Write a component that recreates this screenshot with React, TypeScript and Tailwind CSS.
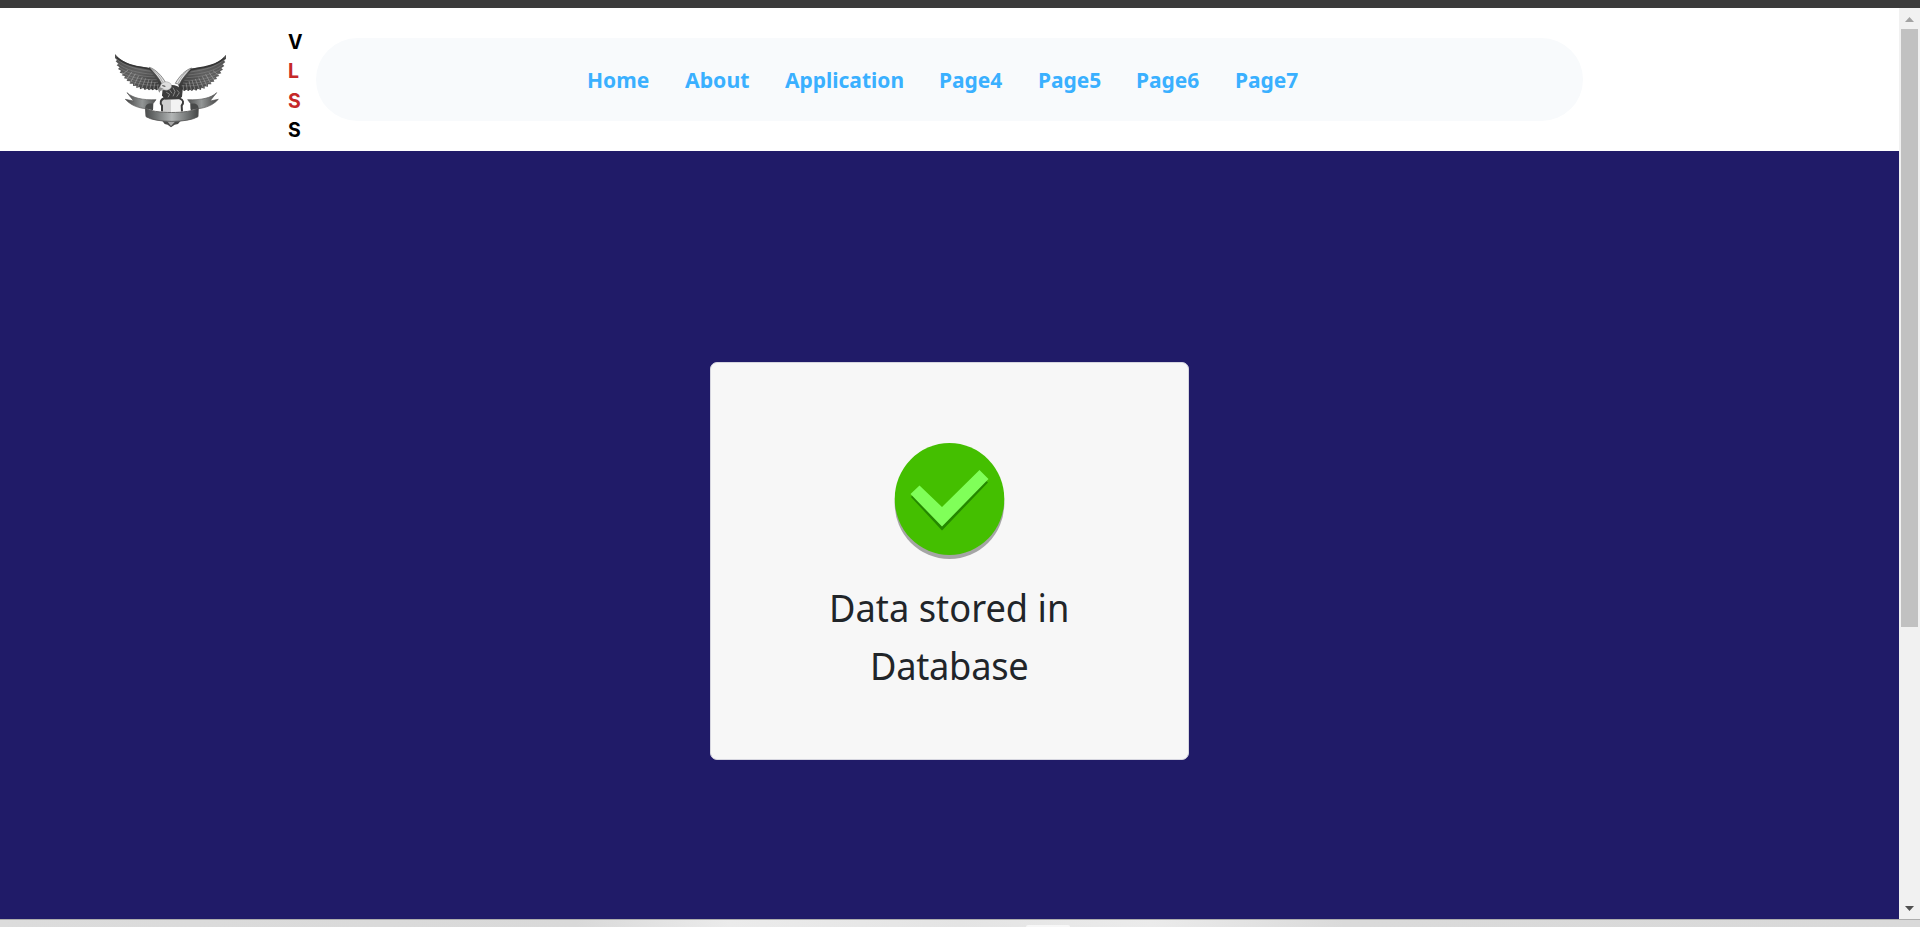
const wingShape =
  "M45 42 C58 58 76 69 98 76 C118 81 136 80 151 84 C168 92 180 112 188 132 L184 150 L176 147 L170 151 L164 147 L158 151 L153 147 L147 151 L142 146 L134 150 L130 144 L120 148 L119 141 L109 144 L109 137 L99 138 L99 131 L89 131 L90 124 L80 123 L82 117 L72 115 L75 109 L65 106 L69 101 L59 98 L63 92 L54 87 L59 82 L50 76 L55 71 L47 64 L51 60 L45 54 Z";

const barbs = [
  "M50 56 C74 80 112 88 152 94",
  "M53 70 C76 90 114 99 158 103",
  "M59 84 C82 100 118 109 164 111",
  "M66 97 C90 112 124 120 170 119",
  "M77 110 C98 121 130 130 174 127",
  "M91 123 C112 131 142 138 178 135",
];

const quills = [
  "M84 90 L68 103", "M96 95 L80 118", "M106 101 L91 128", "M116 107 L102 136",
  "M127 111 L113 141", "M137 115 L125 145", "M147 118 L138 147", "M156 121 L149 148", "M165 127 L161 148", "M174 133 L172 148",
];

function Wing() {
  return (
    <g>
      <path d={wingShape} fill="url(#wing)" />
      <g fill="none" stroke="#a5a5a5" strokeWidth="2" opacity=".5">
        {barbs.map((d) => <path key={d} d={d} />)}
      </g>
      <g fill="none" stroke="#c9c9c9" strokeWidth="2.5" opacity=".5">
        {quills.map((d) => <path key={d} d={d} />)}
      </g>
      <path d="M50 52 C75 76 112 80 150 87 C168 98 178 113 184 130" fill="none" stroke="#353535" strokeWidth="5" />
      <path d="M148 82 C166 87 186 108 197 128 L185 131 C176 112 162 98 148 82Z" fill="#dedede" stroke="#555" strokeWidth="2" />
      <path d="M153 86 C169 95 180 109 188 127" fill="none" stroke="#8b8b8b" strokeWidth="2" />
    </g>
  );
}

function Ribbon() {
  return (
    <g>
      <path d="M81 158 C98 174 128 181 168 179 L159 191 L158 207 C132 207 100 204 76 178 L101 183 Z" fill="url(#tail)" stroke="#555" strokeWidth="2" />
      <path d="M136 205 C135 193 145 188 159 191 L159 211 Z" fill="#484a4a" />
    </g>
  );
}

function EagleLogo() {
  return (
    <svg className="h-[100px] w-[140px]" viewBox="0 0 420 300" aria-label="Eagle">
      <defs>
        <linearGradient id="wing" x1="0" y1="0" x2="1" y2="1">
          <stop offset="0" stopColor="#505050" /><stop offset=".5" stopColor="#606060" /><stop offset="1" stopColor="#303030" />
        </linearGradient>
        <linearGradient id="tail">
          <stop offset="0" stopColor="#444" /><stop offset=".55" stopColor="#939696" /><stop offset="1" stopColor="#505252" />
        </linearGradient>
        <linearGradient id="band">
          <stop offset="0" stopColor="#4a4c4c" /><stop offset=".2" stopColor="#707373" /><stop offset=".5" stopColor="#b2b5b5" /><stop offset=".8" stopColor="#707373" /><stop offset="1" stopColor="#444646" />
        </linearGradient>
      </defs>
      <Wing />
      <g transform="translate(423 2) scale(-1 1)"><Wing /></g>
      <Ribbon />
      <g transform="translate(431 0) scale(-1 1)"><Ribbon /></g>
      <path d="M185 180 L244 180 L244 216 L185 216Z" fill="#f2f2f2" />
      <path d="M185 180 L213 180 L213 216 L185 216Z" fill="#cfcfcf" />
      <path d="M188 146 C206 130 230 131 248 151 L246 170 L238 178 L194 179 L186 166Z" fill="#3c3c3c" />
      <path d="M194 175 C181 178 179 189 186 197 L186 214 M238 175 C251 179 252 188 245 197 L246 214" fill="none" stroke="#3c3c3c" strokeWidth="6" />
      <path d="M199 157 L209 163 L204 172 M219 143 L225 155 L219 169 M230 150 L238 158 L230 170 M209 150 L216 160" fill="none" stroke="#999" strokeWidth="2.5" />
      <path d="M181 137 C186 124 202 122 212 131 C218 139 213 147 203 150 C195 152 190 147 185 151 C179 153 176 148 181 137Z" fill="#dedede" stroke="#919191" strokeWidth="1.5" />
      <path d="M178 141 C172 147 175 155 180 158 C179 151 186 149 191 146Z" fill="#8e8e8e" />
      <path d="M187 137 L196 139" stroke="#333" strokeWidth="3" />
      <path d="M185 240 L244 240 L234 252 L224 254 L213 262 L203 254 L194 252Z" fill="#494949" />
      <path d="M201 243 L213 258 L227 243Z" fill="#a5a5a5" />
      <path d="M136 204 C159 222 269 222 295 204 L294 230 C263 249 168 249 138 230Z" fill="url(#band)" stroke="#555" strokeWidth="2.5" />
    </svg>
  );
}

function SuccessIcon() {
  return (
    <svg className="h-[118px] w-[112px] shrink-0" viewBox="0 0 112 118">
      <ellipse cx="55.5" cy="61.5" rx="54.8" ry="55.5" fill="#a5a5a5" />
      <ellipse cx="55.5" cy="57" rx="54.8" ry="56" fill="#44bf00" />
      <path d="M17 55 L25 46 L48 70 L86 34 L94 40.5 L48 88.5Z" fill="#258800" />
      <path d="M16.5 52 L25.5 43.5 L48 65 L85.5 28 L94.5 37 L48 84.5Z" fill="#80ff59" />
    </svg>
  );
}

const links = [
  { label: "Home", box: "w-[98px]", fit: "scale-x-[.955]" },
  { label: "About", box: "w-[100.5px]", fit: "scale-x-[.965]" },
  { label: "Application", box: "w-[154px]", fit: "scale-x-[.953]" },
  { label: "Page4", box: "w-[98.7px]", fit: "scale-x-[.952]" },
  { label: "Page5", box: "w-[98.7px]", fit: "scale-x-[.952]" },
  { label: "Page6", box: "w-[98.7px]", fit: "scale-x-[.952]" },
  { label: "Page7", box: "w-[98.7px]", fit: "scale-x-[.952]" },
];

export default function App() {
  return (
    <div className="flex h-[927px] w-[1920px] flex-col overflow-hidden bg-white font-['Noto_Sans',sans-serif]">
      <div className="h-2 shrink-0 bg-[#3b3b3b]" />
      <div className="flex h-[911px] shrink-0">
        <main className="flex w-[1899px] flex-col">
          <header className="flex h-[143px] shrink-0 items-start">
            <div className="ml-[100px] mt-8"><EagleLogo /></div>
            <div className="ml-12 mt-5 w-7 font-[Inter,sans-serif] text-[19.5px] font-bold leading-[29.3px] text-black">
              <div>V</div>
              <div className="text-[#c62828]">L</div>
              <div className="text-[#c62828]">S</div>
              <div>S</div>
            </div>
            <nav className="mt-[30px] flex h-[83px] w-[1267px] items-center rounded-[42px] bg-[#f8fafc] pb-[2px] pl-[270.5px]">
              {links.map((l) => (
                <a key={l.label} className={`${l.box} ${l.fit} block shrink-0 origin-left whitespace-nowrap text-[22px] font-bold leading-[34px] text-[#3ab0ff]`}>{l.label}</a>
              ))}
            </nav>
          </header>
          <section className="flex h-[768px] flex-col items-center bg-[#201b68] pt-[211px]">
            <div className="flex h-[398px] w-[479px] flex-col items-center rounded-[7px] border border-[#d5d5df] bg-[#f7f7f7] pt-[79px]">
              <SuccessIcon />
              <h1 className="mt-[18px] scale-x-[.93] text-center text-[39px] font-normal leading-[58px] text-[#212529]">
                Data stored in<br /><span className="tracking-[-0.3px]">Database</span>
              </h1>
            </div>
          </section>
        </main>
        <aside className="flex w-[21px] flex-col items-center bg-[#f1f1f1]">
          <svg className="h-[21px] w-[21px] shrink-0" viewBox="0 0 21 21"><path d="M6 14 L10.5 9 L15 14Z" fill="#a3a3a3" /></svg>
          <div className="h-[598px] w-[17px] bg-[#c1c1c1]" />
          <div className="flex-1" />
          <svg className="h-[21px] w-[21px]" viewBox="0 0 21 21"><path d="M6 8 L10.5 13 L15 8Z" fill="#505050" /></svg>
        </aside>
      </div>
      <footer className="flex h-2 shrink-0 justify-center border-t border-[#adadad] bg-[linear-gradient(90deg,#dcdcdc_0%,#d9d9d9_30%,#ebebeb_38%,#e4e4e4_50%,#ebebeb_60%,#dadada_70%,#d9d9d9_100%)]">
        <div className="ml-[176px] mt-[5px] h-[2px] w-11 rounded-t-sm bg-[#f7f7f7]" />
      </footer>
    </div>
  );
}
